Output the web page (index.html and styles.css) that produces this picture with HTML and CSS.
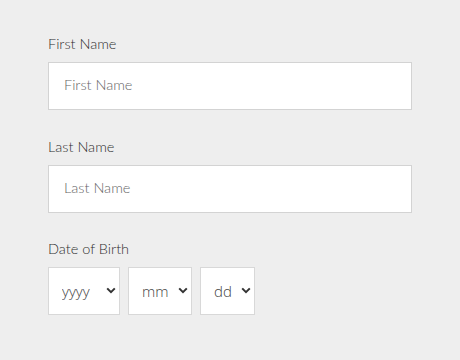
FILE: index.html
```html
<!DOCTYPE html>
<html>
<head>
<meta charset="utf-8">
<link rel="stylesheet" href="styles.css">
</head>
<body>
<form class="form">
  <div class="group">
    <label class="label">First Name</label>
    <input class="text-input" type="text" placeholder="First Name">
  </div>
  <div class="group">
    <label class="label">Last Name</label>
    <input class="text-input" type="text" placeholder="Last Name">
  </div>
  <div class="group">
    <label class="label">Date of Birth</label>
    <div class="dob">
      <div class="sel sel-y">
        <select><option>yyyy</option></select>
        <svg class="chev" width="10" height="7" viewBox="0 0 10 7"><path d="M1.2 1.4 L5 5.2 L8.8 1.4" fill="none" stroke="#333" stroke-width="2"/></svg>
      </div>
      <div class="sel sel-m">
        <select><option>mm</option></select>
        <svg class="chev" width="10" height="7" viewBox="0 0 10 7"><path d="M1.2 1.4 L5 5.2 L8.8 1.4" fill="none" stroke="#333" stroke-width="2"/></svg>
      </div>
      <div class="sel sel-d">
        <select><option>dd</option></select>
        <svg class="chev" width="10" height="7" viewBox="0 0 10 7"><path d="M1.2 1.4 L5 5.2 L8.8 1.4" fill="none" stroke="#333" stroke-width="2"/></svg>
      </div>
    </div>
  </div>
</form>
</body>
</html>
```

FILE: styles.css
```css
html, body {
  margin: 0;
  padding: 0;
  background: #eeeeee;
  width: 460px;
  height: 360px;
  overflow: hidden;
}
.form {
  padding: 34px 0 0 48px;
  font-family: Lato, "Liberation Sans", sans-serif;
}
.group {
  margin-bottom: 27px;
}
.group:nth-child(2) {
  margin-bottom: 26px;
}
.label {
  display: block;
  font-size: 14.5px;
  font-weight: 300;
  line-height: 20px;
  color: #2f2f2f;
  margin-bottom: 8px;
}
.text-input {
  box-sizing: border-box;
  display: block;
  width: 364px;
  height: 48px;
  margin: 0;
  padding: 0 15px 3px;
  border: 1px solid #d3d3d3;
  background: #ffffff;
  font-family: Lato, "Liberation Sans", sans-serif;
  font-size: 14.5px;
  font-weight: 300;
  color: #444;
  outline: none;
}
.text-input::placeholder {
  color: #666666;
}
.dob {
  display: flex;
  gap: 8px;
}
.sel {
  position: relative;
  height: 48px;
}
.sel select {
  box-sizing: border-box;
  appearance: none;
  -webkit-appearance: none;
  width: 100%;
  height: 48px;
  margin: 0;
  padding: 0 0 0 13px;
  border: 1px solid #d8d8d8;
  border-radius: 0;
  background: #ffffff;
  font-family: "Open Sans", "Liberation Sans", sans-serif;
  font-size: 15px;
  font-weight: 300;
  color: #444444;
  outline: none;
}
.sel-y { width: 72px; }
.sel-m { width: 64px; }
.sel-d { width: 55px; }
.chev {
  position: absolute;
  right: 4px;
  top: 20px;
  pointer-events: none;
}
```
